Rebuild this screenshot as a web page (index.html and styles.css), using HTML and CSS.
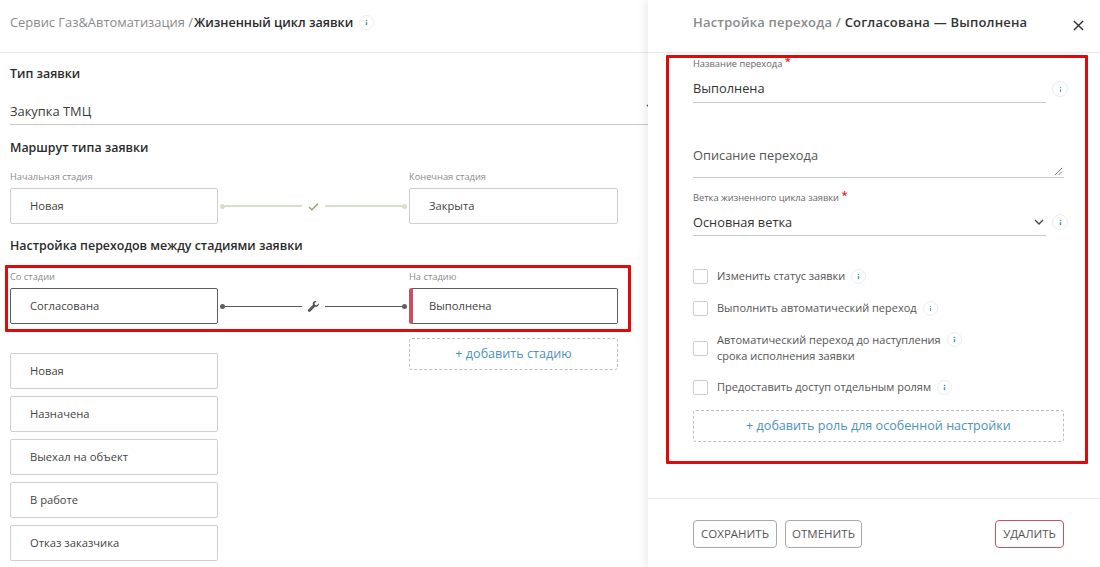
FILE: index.html
```html
<!DOCTYPE html>
<html lang="ru">
<head>
<meta charset="utf-8">
<title>Жизненный цикл заявки</title>
<link rel="stylesheet" href="styles.css">
</head>
<body>
<div class="page">
  <main class="main">
    <header class="top">
      <span class="crumb">Сервис Газ&amp;Автоматизация /</span><strong class="crumb-strong">Жизненный цикл заявки</strong>
      <span class="info info-top"><svg viewBox="0 0 16 16"><circle cx="8" cy="5.5" r="1" /><rect x="7.1" y="7.6" width="1.8" height="3.6" /></svg></span>
    </header>
    <section class="content">
      <h2 class="heading h-type">Тип заявки</h2>
      <div class="select">Закупка ТМЦ<svg class="caret" viewBox="0 0 10 6"><path d="M1 1l4 4 4-4" /></svg></div>
      <h2 class="heading h-route">Маршрут типа заявки</h2>
      <div class="route route-light">
        <span class="cap">Начальная стадия</span><span></span><span class="cap">Конечная стадия</span>
        <div class="stage">Новая</div>
        <div class="link"><i class="dot"></i><i class="line"></i>
          <svg class="link-icon" viewBox="0 0 16 16"><path class="check" d="M2.5 8.5l3.6 3.6 7.4-7.6" /></svg>
          <i class="line"></i><i class="dot"></i></div>
        <div class="stage">Закрыта</div>
      </div>
      <h2 class="heading h-steps">Настройка переходов между стадиями заявки</h2>
      <div class="route route-dark">
        <span class="cap">Со стадии</span><span></span><span class="cap">На стадию</span>
        <div class="stage stage-active">Согласована</div>
        <div class="link"><i class="dot"></i><i class="line"></i>
          <svg class="link-icon" viewBox="0 0 16 16"><path class="wrench" d="M14.6 4.1l-2.5 2.4-2.1-.5-.6-2.1L11.9 1.4C10.3.8 8.6 1.2 7.7 2.5 7 3.5 6.9 4.8 7.3 5.9L1.6 11.6c-.7.7-.7 1.8 0 2.6.7.7 1.9.7 2.6 0l5.7-5.8c1.1.4 2.4.2 3.4-.6 1.2-1 1.7-2.5 1.3-3.7z" /></svg>
          <i class="line"></i><i class="dot"></i></div>
        <div class="stage stage-active stage-target">Выполнена</div>
      </div>
      <div class="lists">
        <ul class="stage-list">
          <li class="stage">Новая</li>
          <li class="stage">Назначена</li>
          <li class="stage">Выехал на объект</li>
          <li class="stage">В работе</li>
          <li class="stage">Отказ заказчика</li>
        </ul>
        <div class="add add-stage">+ добавить стадию</div>
      </div>
    </section>
  </main>
  <aside class="panel">
    <header class="panel-top">
      <span class="panel-title"><span class="muted">Настройка перехода /</span> Согласована — Выполнена</span>
      <svg class="close" viewBox="0 0 12 12"><path d="M1 1l10 10M11 1L1 11" /></svg>
    </header>
    <form class="form">
      <div class="field-row f-name">
        <div class="field">
          <span class="flabel">Название перехода <b>*</b></span>
          <div class="fvalue">Выполнена</div>
        </div>
        <span class="info info-light"><svg viewBox="0 0 16 16"><circle cx="8" cy="5.6" r=".8" /><rect x="7.4" y="7.6" width="1.2" height="3.4" /></svg></span>
      </div>
      <div class="desc">Описание перехода
        <svg class="resize" viewBox="0 0 10 10"><path d="M1 9l8-8M5 9l4-4" /></svg>
      </div>
      <div class="field-row f-branch">
        <div class="field">
          <span class="flabel">Ветка жизненного цикла заявки <b>*</b></span>
          <div class="fvalue fvalue-select">Основная ветка<svg class="chev" viewBox="0 0 10 6"><path d="M1 1l4 4 4-4" /></svg></div>
        </div>
        <span class="info info-light"><svg viewBox="0 0 16 16"><circle cx="8" cy="5.5" r="1" /><rect x="7.1" y="7.6" width="1.8" height="3.6" /></svg></span>
      </div>
      <div class="checks">
        <label class="check-row"><i class="box"></i><span>Изменить статус заявки</span><span class="info"><svg viewBox="0 0 16 16"><circle cx="8" cy="5.5" r="1" /><rect x="7.1" y="7.6" width="1.8" height="3.6" /></svg></span></label>
        <label class="check-row"><i class="box"></i><span>Выполнить автоматический переход</span><span class="info"><svg viewBox="0 0 16 16"><circle cx="8" cy="5.6" r=".8" /><rect x="7.4" y="7.6" width="1.2" height="3.4" /></svg></span></label>
        <label class="check-row check-two"><i class="box"></i><span class="two">Автоматический переход до наступления<br>срока исполнения заявки</span><span class="info info-up"><svg viewBox="0 0 16 16"><circle cx="8" cy="5.5" r="1" /><rect x="7.1" y="7.6" width="1.8" height="3.6" /></svg></span></label>
        <label class="check-row"><i class="box"></i><span>Предоставить доступ отдельным ролям</span><span class="info"><svg viewBox="0 0 16 16"><circle cx="8" cy="5.5" r="1" /><rect x="7.1" y="7.6" width="1.8" height="3.6" /></svg></span></label>
      </div>
      <div class="add add-role">+ добавить роль для особенной настройки</div>
    </form>
    <footer class="panel-foot">
      <button class="btn btn-save" type="button">СОХРАНИТЬ</button>
      <button class="btn btn-cancel" type="button">ОТМЕНИТЬ</button>
      <button class="btn btn-del" type="button">УДАЛИТЬ</button>
    </footer>
  </aside>
  <div class="mark mark-row"></div>
  <div class="mark mark-form"></div>
</div>
</body>
</html>
```
FILE: styles.css
```css
* { box-sizing: border-box; }
html, body { margin: 0; height: 100%; overflow: hidden; background: #fff; }
body { font-family: "Open Sans", "Noto Sans", sans-serif; color: #3a3a3a; }
.page { position: relative; display: flex; width: 1100px; height: 567px; overflow: hidden; }

.main { width: 648px; flex: none; }
.top { display: flex; align-items: center; height: 53px; padding: 0 0 8px 10px; border-bottom: 1px solid #e9e9e9; font-size: 12.9px; white-space: nowrap; }
.crumb { color: #8a8a8a; margin-right: 1px; }
.crumb-strong { color: #2b2b2b; font-weight: 600; font-size: 12.6px; }
.content { padding: 0 0 0 10px; }
.heading { margin: 0; font-size: 12.4px; line-height: 16px; font-weight: 600; color: #2b2b2b; }
.h-type { margin-top: 13px; }
.select { position: relative; height: 43px; padding-top: 19px; margin-bottom: 15px; line-height: 20px; font-size: 12.9px; border-bottom: 1px solid #c9c9c9; width: 640px; }
.caret { position: absolute; right: -4px; top: 22px; width: 8px; height: 5px; fill: none; stroke: #444; stroke-width: 1.4; }
.h-route { margin-top: 0; }
.route { display: grid; grid-template-columns: 208px 191px 209px; }
.route-light { margin-top: 15px; }
.cap { font-size: 9.3px; line-height: 12px; height: 17px; color: #8a8a8a; }
.stage { display: flex; align-items: center; height: 36px; padding: 0 0 1px 19px; border: 1px solid #cfcfcf; border-radius: 2px; font-size: 11.2px; color: #444; background: #fff; }
.link { display: flex; align-items: center; padding: 0 2px; }
.line { flex: 1; height: 1px; }
.dot { width: 5px; height: 5px; border-radius: 50%; flex: none; }
.route-light .line { background: #d5dfc9; height: 2px; }
.route-light .dot { background: #d5dfc9; }
.route-dark .line { background: #5a5a5a; }
.route-dark .dot { background: #5f5f5f; }
.link-icon { width: 13px; height: 13px; flex: none; margin: 0 5px; }
.check { fill: none; stroke: #8cae6c; stroke-width: 1.8; }
.wrench { fill: #5a5a5a; }
.h-steps { margin-top: 14px; }
.route-dark { margin-top: 17px; }
.stage-active { border-color: #5c5c5c; }
.stage-target { border-left: 4px solid #c9505c; padding-left: 16px; }
.lists { display: flex; align-items: flex-start; }
.stage-list { list-style: none; margin: 29px 0 0; padding: 0; width: 208px; display: flex; flex-direction: column; gap: 7px; }
.add { display: flex; align-items: center; justify-content: center; padding-bottom: 2px; border: 1px dashed #bdbdbd; border-radius: 3px; color: #4d93b8; font-size: 12.6px; }
.add-stage { margin: 14px 0 0 191px; width: 209px; height: 32px; }

.panel { width: 452px; flex: none; height: 567px; background: #fff; box-shadow: -3px 0 8px rgba(0,0,0,.08); z-index: 1; display: flex; flex-direction: column; }
.panel-top { display: flex; align-items: flex-start; justify-content: space-between; height: 53px; padding: 14px 16px 0 45px; border-bottom: 1px solid #e9e9e9; }
.panel-title { font-size: 13px; line-height: 17px; font-weight: 600; color: #333; letter-spacing: .2px; }
.muted { color: #8a8a8a; }
.close { width: 11px; height: 11px; margin-top: 6px; fill: none; stroke: #2f2f2f; stroke-width: 1.5; }
.form { flex: 1; padding: 0 36px 0 45px; }
.field-row { display: flex; align-items: flex-end; }
.field { width: 353px; flex: none; }
.flabel { display: block; font-size: 9.3px; line-height: 12px; color: #666; }
.flabel b { color: #d22; font-weight: 600; font-size: 11px; line-height: 0; vertical-align: 2px; }
.fvalue { position: relative; font-size: 12.8px; line-height: 20px; height: 33px; padding-top: 8px; border-bottom: 1px solid #c9c9c9; color: #333; }
.f-name { margin-top: 5px; }
.f-name .info-light, .f-branch .info-light { margin: 0 0 6px 6px; }
.desc { position: relative; margin-top: 42px; width: 371px; height: 33px; font-size: 12.8px; line-height: 20px; border-bottom: 1px solid #c9c9c9; color: #555; }
.resize { position: absolute; right: 1px; bottom: 1px; width: 9px; height: 9px; fill: none; stroke: #555; stroke-width: .9; }
.f-branch { margin-top: 14px; }
.fvalue-select { height: 32px; padding-top: 8px; }
.chev { position: absolute; right: 2px; top: 15px; width: 10px; height: 6px; fill: none; stroke: #444; stroke-width: 1.3; }
.checks { margin-top: 32px; display: flex; flex-direction: column; gap: 16px; }
.check-row { display: flex; align-items: center; min-height: 16px; font-size: 11px; line-height: 16px; color: #555; }
.box { width: 15px; height: 15px; flex: none; margin-right: 9px; border: 1px solid #cfcfcf; border-radius: 2px; }
.two { display: block; }
.info { display: inline-flex; align-items: center; justify-content: center; width: 15px; height: 15px; flex: none; margin-left: 6px; border: 1px solid #ececec; border-radius: 50%; background: #fff; }
.info svg { width: 13px; height: 13px; fill: #3e9cc4; }
.info-light { width: 16px; height: 16px; }
.info-top { margin-left: 6px; }
.info-up { align-self: flex-start; }
.check-two { margin-bottom: -1px; }
.add-role { margin-top: 15px; width: 371px; height: 32px; }
.panel-foot { display: flex; align-items: center; height: 69px; padding: 21px 36px 20px 45px; border-top: 1px solid #e9e9e9; gap: 8px; }
.btn { height: 28px; padding: 0; border: 1px solid #a9a9a9; border-radius: 4px; background: #fff; font: inherit; font-size: 11.5px; color: #555; }
.btn-save { width: 84px; }
.btn-cancel { width: 77px; }
.btn-del { width: 69px; margin-left: auto; border-color: #c9505c; }

.mark { position: absolute; border: 3px solid #e10a0a; border-radius: 1px; z-index: 2; pointer-events: none; }
.mark-row { left: 5px; top: 265px; width: 626px; height: 67px; }
.mark-form { left: 666px; top: 55px; width: 422px; height: 409px; }
```
